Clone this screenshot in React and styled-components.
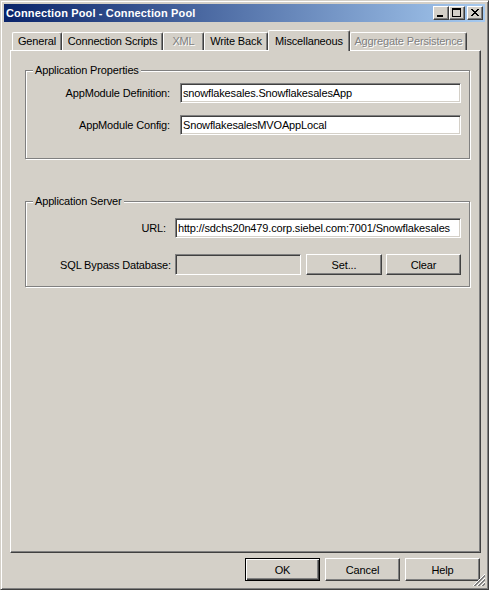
import React from 'react';
import styled, { createGlobalStyle } from 'styled-components';

const Global = createGlobalStyle`
  html, body { margin: 0; padding: 0; background: #d4d0c8; }
  body { font-family: "Liberation Sans", Arial, sans-serif; font-size: 11px; color: #000; }
  * { box-sizing: border-box; }
`;

const Window = styled.div`
  position: relative;
  width: 489px;
  height: 590px;
  background: #d4d0c8;
  border: 1px solid;
  border-color: #d4d0c8 #404040 #404040 #d4d0c8;
  box-shadow: inset 1px 1px 0 #fff, inset -1px -1px 0 #808080;
  padding: 3px;
  display: flex;
  flex-direction: column;
  letter-spacing: -0.15px;
`;

const TitleBar = styled.div`
  height: 18px;
  flex: none;
  display: flex;
  align-items: center;
  justify-content: space-between;
  padding: 0 2px;
  background: linear-gradient(to right, #0a246a, #a6caf0);
`;

const Title = styled.div`
  color: #fff;
  font-weight: bold;
  font-size: 11px;
  letter-spacing: 0.15px;
  white-space: nowrap;
`;

const CaptionGroup = styled.div`
  display: flex;
  align-items: center;
`;

const CaptionButton = styled.div`
  width: 16px;
  height: 14px;
  margin-left: ${(p) => p.$gap || 0}px;
  background: #d4d0c8;
  border: 1px solid;
  border-color: #fff #404040 #404040 #fff;
  box-shadow: inset -1px -1px 0 #808080;
  display: flex;
  svg { display: block; }
`;

const Body = styled.div`
  flex: 1;
  display: flex;
  flex-direction: column;
  padding: 8px 4px 0 6px;
  min-height: 0;
`;

const TabStrip = styled.div`
  height: 20px;
  flex: none;
  display: flex;
  align-items: flex-end;
  padding-left: 2px;
`;

const Tab = styled.div`
  position: relative;
  z-index: ${(p) => (p.$active ? 2 : 1)};
  width: ${(p) => p.$w}px;
  height: ${(p) => (p.$active ? 21 : 18)}px;
  margin-bottom: ${(p) => (p.$active ? -1 : 0)}px;
  background: #d4d0c8;
  border-top: 1px solid #fff;
  border-left: 1px solid #fff;
  border-right: 1px solid #404040;
  border-radius: 2px 2px 0 0;
  box-shadow: inset -1px 0 0 #808080;
  padding-top: ${(p) => (p.$active ? 4 : 2)}px;
  line-height: 13px;
  text-align: center;
  white-space: nowrap;
  color: ${(p) => (p.$disabled ? '#808080' : '#000')};
  text-shadow: ${(p) => (p.$disabled ? '1px 1px 0 #fff' : 'none')};
`;

const Panel = styled.div`
  flex: 1;
  border: 1px solid;
  border-color: #fff #404040 #404040 #fff;
  box-shadow: inset -1px -1px 0 #808080;
  padding: 19px 0 0 14px;
`;

const GroupBox = styled.div`
  position: relative;
  width: 445px;
  margin-top: ${(p) => p.$mt || 0}px;
  border: 1px solid #808080;
  box-shadow: inset 1px 1px 0 #fff, 1px 1px 0 #fff;
  padding: ${(p) => p.$pad};
  display: grid;
  grid-template-columns: 1fr ${(p) => p.$col}px;
  column-gap: ${(p) => p.$gap}px;
  row-gap: ${(p) => p.$rowGap}px;
  align-items: center;
`;

const Legend = styled.span`
  position: absolute;
  top: -7px;
  left: 7px;
  padding: 0 2px;
  line-height: 13px;
  background: #d4d0c8;
  white-space: nowrap;
`;

const Label = styled.label`
  text-align: right;
  white-space: nowrap;
  padding-right: ${(p) => p.$pr || 0}px;
`;

const TextBox = styled.input`
  display: block;
  width: ${(p) => (p.$w ? `${p.$w}px` : '100%')};
  height: ${(p) => p.$h || 20}px;
  margin: 0;
  padding: 0 2px;
  border: 1px solid;
  border-color: #808080 #fff #fff #808080;
  box-shadow: inset 1px 1px 0 #404040, inset -1px -1px 0 #d4d0c8;
  background: ${(p) => (p.disabled ? '#d4d0c8' : '#fff')};
  font: inherit;
  letter-spacing: inherit;
  color: #000;
  outline: none;
  flex: none;
`;

const Row = styled.div`
  display: flex;
  gap: 5px;
  align-items: center;
`;

const Button = styled.button`
  width: ${(p) => p.$w || 75}px;
  height: ${(p) => p.$h || 23}px;
  flex: none;
  margin: 0;
  padding: 0;
  margin-left: ${(p) => p.$ml || 0}px;
  background: #d4d0c8;
  font: inherit;
  letter-spacing: inherit;
  color: #000;
  border: 1px solid;
  border-color: ${(p) => (p.$default ? '#000' : '#fff #404040 #404040 #fff')};
  box-shadow: ${(p) =>
    p.$default
      ? 'inset 1px 1px 0 #fff, inset -1px -1px 0 #404040, inset -2px -2px 0 #808080'
      : 'inset -1px -1px 0 #808080'};
  cursor: default;
`;

const Footer = styled.div`
  flex: none;
  display: flex;
  justify-content: flex-end;
  gap: 5px;
  padding: 5px 5px 5px 0;
`;

const Grip = styled.svg`
  position: absolute;
  right: 3px;
  bottom: 3px;
  display: block;
`;

const px = (pts, fill) =>
  pts.map(([x, y], i) => <rect key={fill + i} x={x} y={y} width="1" height="1" fill={fill} />);

const closePts = [
  [0, 0], [1, 0], [6, 0], [7, 0],
  [1, 1], [2, 1], [5, 1], [6, 1],
  [2, 2], [3, 2], [4, 2], [5, 2],
  [3, 3], [4, 3],
  [2, 4], [3, 4], [4, 4], [5, 4],
  [1, 5], [2, 5], [5, 5], [6, 5],
  [0, 6], [1, 6], [6, 6], [7, 6],
];

const diag = (c) => {
  const out = [];
  for (let x = 0; x < 12; x++) {
    const y = c - x;
    if (y >= 0 && y < 12) out.push([x, y]);
  }
  return out;
};

const tabs = [
  { label: 'General', w: 50 },
  { label: 'Connection Scripts', w: 101 },
  { label: 'XML', w: 41, disabled: true },
  { label: 'Write Back', w: 64 },
  { label: 'Miscellaneous', w: 82, active: true },
  { label: 'Aggregate Persistence', w: 117, disabled: true },
];

export default function App() {
  return (
    <>
      <Global />
      <Window>
        <TitleBar>
          <Title>Connection Pool - Connection Pool</Title>
          <CaptionGroup>
            <CaptionButton>
              <svg width="14" height="12" shapeRendering="crispEdges">
                <rect x="3" y="8" width="6" height="2" fill="#000" />
              </svg>
            </CaptionButton>
            <CaptionButton>
              <svg width="14" height="12" shapeRendering="crispEdges">
                <rect x="2" y="1" width="9" height="2" fill="#000" />
                <rect x="2" y="1" width="1" height="9" fill="#000" />
                <rect x="10" y="1" width="1" height="9" fill="#000" />
                <rect x="2" y="9" width="9" height="1" fill="#000" />
              </svg>
            </CaptionButton>
            <CaptionButton $gap={2}>
              <svg width="14" height="12" shapeRendering="crispEdges">
                <g transform="translate(3,2)">{px(closePts, '#000')}</g>
              </svg>
            </CaptionButton>
          </CaptionGroup>
        </TitleBar>

        <Body>
          <TabStrip>
            {tabs.map((t) => (
              <Tab key={t.label} $w={t.w} $active={t.active} $disabled={t.disabled}>
                {t.label}
              </Tab>
            ))}
          </TabStrip>
          <Panel>
            <GroupBox $pad="12px 8px 23px 0" $col={281} $gap={10} $rowGap={12}>
              <Legend>Application Properties</Legend>
              <Label>AppModule Definition:</Label>
              <TextBox readOnly defaultValue="snowflakesales.SnowflakesalesApp" />
              <Label>AppModule Config:</Label>
              <TextBox readOnly defaultValue="SnowflakesalesMVOAppLocal" />
            </GroupBox>

            <GroupBox $mt={42} $pad="16px 8px 11px 0" $col={286} $gap={4} $rowGap={16}>
              <Legend>Application Server</Legend>
              <Label $pr={5}>URL:</Label>
              <TextBox readOnly defaultValue="http://sdchs20n479.corp.siebel.com:7001/Snowflakesales" />
              <Label>SQL Bypass Database:</Label>
              <Row>
                <TextBox disabled $w={126} $h={21} defaultValue="" />
                <Button $w={76} $h={21}>Set...</Button>
                <Button $w={75} $h={21} $ml={-1}>Clear</Button>
              </Row>
            </GroupBox>
          </Panel>
        </Body>

        <Footer>
          <Button $default>OK</Button>
          <Button>Cancel</Button>
          <Button>Help</Button>
        </Footer>

        <Grip width="12" height="12" shapeRendering="crispEdges">
          {px([...diag(11), ...diag(15), ...diag(19)], '#fff')}
          {px([...diag(12), ...diag(13), ...diag(16), ...diag(17), ...diag(20), ...diag(21)], '#808080')}
        </Grip>
      </Window>
    </>
  );
}
